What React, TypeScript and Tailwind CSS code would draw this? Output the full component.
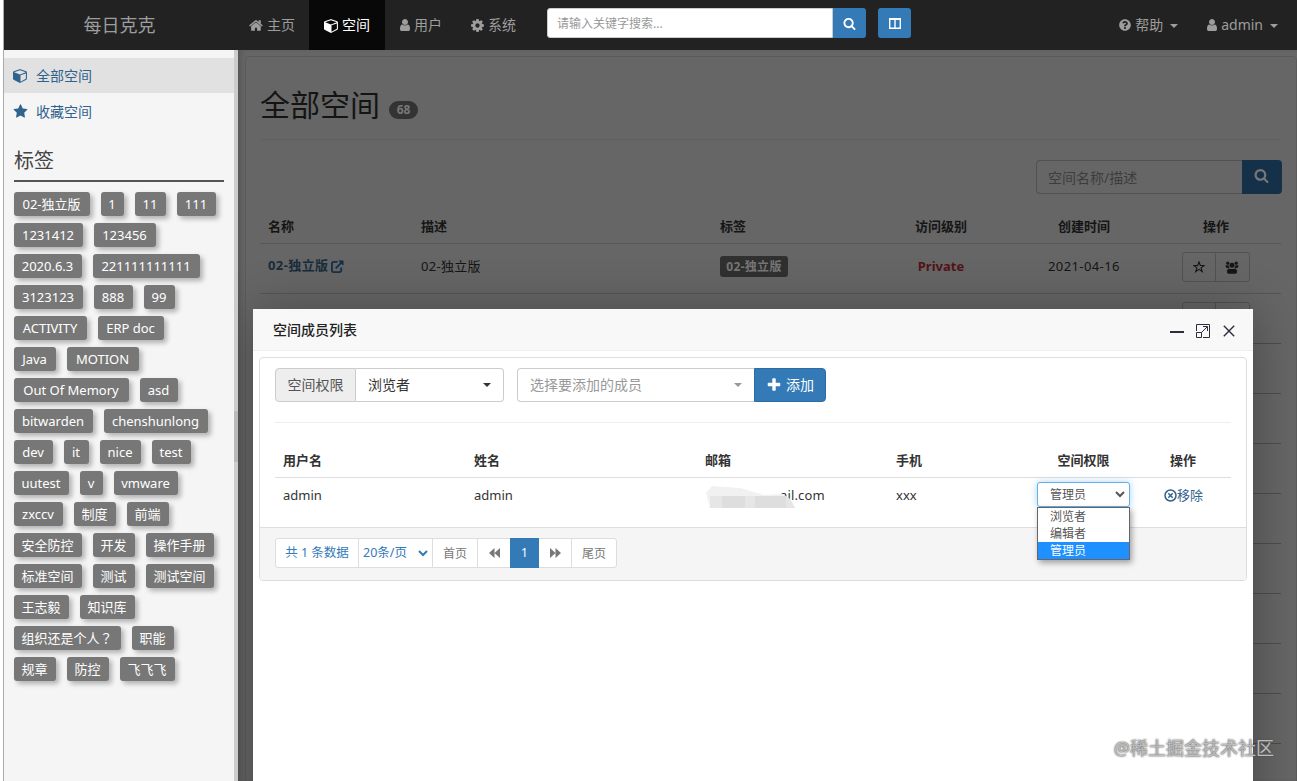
import React from "react";
import { FaQuestionCircle } from "react-icons/fa";

const PATHS = {
  home: "M1408 992v480q0 26-19 45t-45 19h-384v-384h-256v384h-384q-26 0-45-19t-19-45v-480q0-1 .5-3t.5-3l575-474 575 474q1 2 1 6zm223-69l-62 74q-8 9-21 11h-3q-13 0-21-7l-692-577-692 577q-12 8-24 7-13-2-21-11l-62-74q-8-10-7-23.5t11-21.5l719-599q32-26 76-26t76 26l244 204v-195q0-14 9-23t23-9h192q14 0 23 9t9 23v408l219 182q10 8 11 21.5t-7 23.5z",
  user: "M1536 1399q0 109-62.5 187t-150.5 78h-854q-88 0-150.5-78t-62.5-187q0-85 8.5-160.5t31.5-152 58.5-131 94-89 134.5-34.5q131 128 313 128t313-128q76 0 134.5 34.5t94 89 58.5 131 31.5 152 8.5 160.5zm-256-887q0 159-112.5 271.5t-271.5 112.5-271.5-112.5-112.5-271.5 112.5-271.5 271.5-112.5 271.5 112.5 112.5 271.5z",
  cube: "M896 1629l640-349v-636l-640 233v752zm-64-865l698-254-698-254-698 254zm832-252v768q0 35-18 65t-49 47l-704 384q-28 16-61 16t-61-16l-704-384q-31-17-49-47t-18-65v-768q0-40 23-73t61-47l704-256q22-8 44-8t44 8l704 256q38 14 61 47t23 73z",
  cog: "M1152 896q0-106-75-181t-181-75-181 75-75 181 75 181 181 75 181-75 75-181zm512-109v222q0 12-8 23t-20 13l-185 28q-19 54-39 91 35 50 107 138 10 12 10 25t-9 23q-27 37-99 108t-94 71q-12 0-26-9l-138-108q-44 23-91 38-16 136-29 186-7 28-36 28h-222q-14 0-24.5-8.5t-11.5-21.5l-28-184q-49-16-90-37l-141 107q-10 9-25 9-14 0-25-11-126-114-165-168-7-10-7-23 0-12 8-23 15-21 51-66.5t54-70.5q-27-50-41-99l-183-27q-13-2-21-12.5t-8-23.5v-222q0-12 8-23t19-13l186-28q14-46 39-92-40-57-107-138-10-12-10-24 0-10 9-23 26-36 98.5-107.5t94.5-71.5q13 0 26 10l138 107q44-23 91-38 16-136 29-186 7-28 36-28h222q14 0 24.5 8.5t11.5 21.5l28 184q49 16 90 37l142-107q9-9 24-9 13 0 25 10 129 119 165 170 7 8 7 22 0 12-8 23-15 21-51 66.5t-54 70.5q26 50 41 98l183 28q13 2 21 12.5t8 23.5z",
  star: "M1728 647q0 22-26 48l-363 354 86 500q1 7 1 20 0 21-10.5 35.5t-30.5 14.5q-19 0-40-12l-449-236-449 236q-22 12-40 12-21 0-31.5-14.5t-10.5-35.5q0-6 2-20l86-500-364-354q-25-27-25-48 0-37 56-46l502-73 225-455q19-41 49-41t49 41l225 455 502 73q56 9 56 46z",
  search: "M1216 832q0-185-131.5-316.5t-316.5-131.5-316.5 131.5-131.5 316.5 131.5 316.5 316.5 131.5 316.5-131.5 131.5-316.5zm512 832q0 52-38 90t-90 38q-54 0-90-38l-343-342q-179 124-399 124-143 0-273.5-55.5t-225-150-150-225-55.5-273.5 55.5-273.5 150-225 225-150 273.5-55.5 273.5 55.5 225 150 150 225 55.5 273.5q0 220-124 399l343 343q37 37 37 90z",
  plus: "M1600 736v192q0 40-28 68t-68 28h-416v416q0 40-28 68t-68 28h-192q-40 0-68-28t-28-68v-416h-416q-40 0-68-28t-28-68v-192q0-40 28-68t68-28h416v-416q0-40 28-68t68-28h192q40 0 68 28t28 68v416h416q40 0 68 28t28 68z",
};

function Icon({ name, className = "size-[15px]" }: { name: keyof typeof PATHS; className?: string }) {
  return (
    <svg viewBox="0 0 1792 1792" fill="currentColor" className={`shrink-0 ${className}`}>
      <path d={PATHS[name]} />
    </svg>
  );
}

function Caret({ className = "" }: { className?: string }) {
  return (
    <svg viewBox="0 0 8 4" fill="currentColor" className={`h-1 w-2 shrink-0 ${className}`}>
      <path d="M0 0h8L4 4z" />
    </svg>
  );
}

function Chevron({ className = "" }: { className?: string }) {
  return (
    <svg viewBox="0 0 10 7" fill="none" stroke="currentColor" strokeWidth="2" className={`h-[7px] w-[10px] shrink-0 ${className}`}>
      <path d="M1 1l4 4 4-4" />
    </svg>
  );
}

const TAG_ROWS: [string, string][][] = [
  [["02-独立版", "w-[76px]"], ["1", "w-[23px]"], ["11", "w-[31px]"], ["111", "w-[39px]"]],
  [["1231412", "w-[69px]"], ["123456", "w-[62px]"]],
  [["2020.6.3", "w-[68px]"], ["221111111111", "w-[107px]"]],
  [["3123123", "w-[69px]"], ["888", "w-[39px]"], ["99", "w-[31px]"]],
  [["ACTIVITY", "w-[73px]"], ["ERP doc", "w-[66px]"]],
  [["Java", "w-[42px]"], ["MOTION", "w-[72px]"]],
  [["Out Of Memory", "w-[115px]"], ["asd", "w-[38px]"]],
  [["bitwarden", "w-[79px]"], ["chenshunlong", "w-[104px]"]],
  [["dev", "w-[39px]"], ["it", "w-[25px]"], ["nice", "w-[41px]"], ["test", "w-[39px]"]],
  [["uutest", "w-[55px]"], ["v", "w-[23px]"], ["vmware", "w-[64px]"]],
  [["zxccv", "w-[49px]"], ["制度", "w-[42px]"], ["前端", "w-[42px]"]],
  [["安全防控", "w-[68px]"], ["开发", "w-[42px]"], ["操作手册", "w-[68px]"]],
  [["标准空间", "w-[68px]"], ["测试", "w-[42px]"], ["测试空间", "w-[68px]"]],
  [["王志毅", "w-[55px]"], ["知识库", "w-[55px]"]],
  [["组织还是个人？", "w-[107px]"], ["职能", "w-[42px]"]],
  [["规章", "w-[42px]"], ["防控", "w-[42px]"], ["飞飞飞", "w-[55px]"]],
];

function Navbar() {
  return (
    <nav className="flex h-[50px] shrink-0 bg-[#222] text-sm text-[#9d9d9d]">
      <div className="flex w-[231px] items-center justify-center text-lg">每日克克</div>
      <a className="flex w-[74px] items-center justify-center gap-[3px]"><Icon name="home" />主页</a>
      <a className="flex w-[76px] items-center justify-center gap-[3px] bg-[#080808] text-white"><Icon name="cube" />空间</a>
      <a className="flex w-[70px] items-center justify-center gap-[2px]"><Icon name="user" className="size-[14px]" />用户</a>
      <a className="flex w-[76px] items-center justify-center gap-[3px]"><Icon name="cog" />系统</a>
      <div className="mt-2 ml-4 flex h-[30px]">
        <div className="flex w-[286px] items-center rounded-l-[3px] border border-[#ccc] bg-white pt-[1px] pl-[9px] text-xs text-[#999]">请输入关键字搜索...</div>
        <button className="flex w-[33px] items-center justify-center rounded-r-[3px] bg-[#337ab7] text-white"><Icon name="search" className="size-[13px]" /></button>
        <button className="ml-3 flex w-[33px] items-center justify-center rounded-[3px] bg-[#337ab7] text-white">
          <svg viewBox="0 0 12 11" fill="none" stroke="currentColor" strokeWidth="1.4" className="h-[11px] w-3"><path d="M.7.7h10.6v9.6H.7zM6 1v9M1 1.2h10" /></svg>
        </button>
      </div>
      <div className="ml-auto flex items-center pr-[19px] pb-[1px]">
        <FaQuestionCircle className="size-3 shrink-0" />
        <span className="ml-1">帮助</span>
        <Caret className="mt-[2px] ml-[7px]" />
        <Icon name="user" className="ml-[27px] size-[14px]" />
        <span className="ml-[2px] text-[14px]">admin</span>
        <Caret className="mt-[2px] ml-[7px]" />
      </div>
    </nav>
  );
}

function Sidebar() {
  return (
    <aside className="flex w-[234px] shrink-0 bg-[#f5f5f5]">
      <div className="w-[230px] pt-2">
        <a className="flex h-[35px] items-center bg-[#e1e1e1] pl-[9px] text-sm text-[#2f628c]"><Icon name="cube" className="size-[15px]" /><span className="ml-2">全部空间</span></a>
        <a className="mt-[1px] flex h-[35px] items-center pl-[9px] text-sm text-[#2f628c]"><Icon name="star" /><span className="ml-2">收藏空间</span></a>
        <div className="mr-[10px] ml-[10px]">
          <h3 className="mt-[10px] flex h-[43px] items-center border-b-2 border-[#555] pt-[2px] text-xl text-[#444]">标签</h3>
          <div className="mt-[10px] flex flex-col gap-[7px]">
            {TAG_ROWS.map((row, i) => (
              <div key={i} className="flex gap-[11px]">
                {row.map(([label, width]) => (
                  <span key={label} className={`flex h-6 items-center justify-center rounded-[3px] bg-[#777] pr-[1px] text-[13px] whitespace-nowrap text-white shadow-[3px_3px_5px_rgba(0,0,0,0.28)] ${label.endsWith("？") ? "font-['Noto_Sans_CJK_TC',sans-serif]" : "pt-[1px]"} ${width}`}>{label}</span>
                ))}
              </div>
            ))}
          </div>
        </div>
      </div>
      <div className="w-1 bg-[#ccc] pt-[361px]"><div className="h-[51px] bg-[#b9b9b9]" /></div>
    </aside>
  );
}

const SPACE_GRID = "grid grid-cols-[153px_299px_163px_132px_154px_1fr]";

function RowButtons() {
  return (
    <div className="mt-2 mr-[11px] flex h-[30px] w-[68px] justify-self-center rounded-[3px] border border-[#525252] text-[#161616]">
      <span className="flex w-[33px] items-center justify-center border-r border-[#525252]">
        <svg viewBox="0 0 14 14" fill="none" stroke="currentColor" strokeWidth="1.3" className="size-3"><path d="M7 1l1.5 4.3H13L9.4 8l1.4 4.4L7 9.7l-3.8 2.7L4.6 8 1 5.3h4.5z" /></svg>
      </span>
      <span className="flex flex-1 items-center justify-center">
        <svg viewBox="0 0 14 13" fill="currentColor" className="h-[13px] w-[14px]"><circle cx="2.800" cy="2.200" r="1.600" /><circle cx="11.200" cy="2.200" r="1.600" /><circle cx="7" cy="4.300" r="2.500" /><path d="M.6 4.200h3q0 1.800 1 2.800H1.800Q.4 7 .6 4.200zM13.400 4.200h-3q0 1.800-1 2.800h2.800Q13.600 7 13.400 4.200zM4 7.400q3 1.400 6 0 2 .4 2 3.600 0 1.700-1.500 1.700h-7Q2 12.700 2 11q0-3.200 2-3.600z" /></svg>
      </span>
    </div>
  );
}

function SpaceList() {
  return (
    <div className="mt-[6px] ml-[7px] h-[760px] rounded-[4px] border border-[#5b5b5b] pr-[15px] pl-[14px]">
      <div className="flex h-[83px] items-center gap-[9px] border-b border-[#606060] pt-3">
        <h1 className="text-[30px] leading-[33px] text-[#141414]">全部空间</h1>
        <span className="mt-3 flex h-[18px] w-[29px] items-center justify-center rounded-full bg-[#333] text-xs font-bold text-[#777]">68</span>
      </div>
      <div className="mt-5 -mr-[1px] flex h-[34px] justify-end">
        <div className="flex w-[206px] items-center rounded-l-[4px] border border-r-0 border-[#515151] pt-[1px] pl-[11px] text-sm text-[#3d3d3d]">空间名称/描述</div>
        <div className="flex w-10 items-center justify-center rounded-r-[4px] bg-[#15314a] text-[#777]"><Icon name="search" className="mr-[1px] mb-[3px] size-[15px]" /></div>
      </div>
      <div className={`mt-4 h-[34px] items-center border-b border-[#575757] text-[13px] font-bold text-[#151515] ${SPACE_GRID}`}>
        <span className="pl-2">名称</span><span className="pl-2">描述</span><span className="pl-2">标签</span>
        <span className="text-center">访问级别</span><span className="pl-[51px]">创建时间</span><span className="pl-[42px]">操作</span>
      </div>
      <div className={`h-[50px] border-b border-[#555] text-[13px] text-[#151515] ${SPACE_GRID}`}>
        <span className="mt-3 flex h-5 items-center gap-[3px] pl-2 font-bold tracking-[0.4px] text-[#182c3c]">02-独立版
          <svg viewBox="0 0 14 14" fill="none" stroke="currentColor" strokeWidth="2" className="size-[13px] text-[#15314a]"><path d="M7 2H3Q1 2 1 4v7q0 2 2 2h6q2 0 2-2V8M5 9l7-7" /><path d="M8.500 1H13v4.500z" fill="currentColor" strokeWidth="1" /></svg>
        </span>
        <span className="mt-3 h-5 pl-2 leading-5 tracking-[0.3px]">02-独立版</span>
        <span className="mt-3 ml-2 flex h-[21px] w-[68px] items-center justify-center rounded-[3px] bg-[#303030] text-xs font-bold tracking-[0.300px] text-[#777]">02-独立版</span>
        <span className="mt-3 text-center leading-5 font-bold text-[#521415]">Private</span>
        <span className="mt-3 pl-[41px] text-[13px] leading-5 tracking-[0.400px]">2021-04-16</span>
        <RowButtons />
      </div>
      {[1, 2, 3, 4, 5, 6, 7, 8, 9].map((row) => (
        <div key={row} className={`h-[50px] border-b border-[#4d4d4d] ${SPACE_GRID}`}><div className="col-start-6 grid"><RowButtons /></div></div>
      ))}
    </div>
  );
}

const MEMBER_GRID = "grid grid-cols-[191px_231px_191px_141px_109px_1fr]";

function MemberDialog() {
  return (
    <section className="absolute top-[259px] left-[15px] h-[540px] w-[1000px] rounded-t-[2px] bg-white shadow-[1px_1px_50px_rgba(0,0,0,0.3)]">
      <header className="flex h-[42px] items-center border-b border-[#eee] bg-[#f8f8f8] pr-[18px] pl-5 text-sm font-medium text-[#222]">
        空间成员列表
        <div className="mt-[2px] ml-auto flex items-center text-[#2e2d3c]">
          <svg viewBox="0 0 14 14" stroke="currentColor" strokeWidth="2" className="size-[14px]"><path d="M0 8h14" /></svg>
          <svg viewBox="0 0 14 14" fill="none" stroke="currentColor" className="ml-3 size-[14px]"><path d="M.5 7V.5h13v13H7M.5 8.500h5v5h-5zM5.500 8.500L11 3M7 2.500h4.500V7" /></svg>
          <svg viewBox="0 0 12 12" stroke="currentColor" strokeWidth="1.4" className="ml-[13px] size-3"><path d="M.8.800l10.400 10.400M11.200.8L.8 11.200" /></svg>
        </div>
      </header>
      <div className="mx-[6px] mt-[6px] rounded-[4px] border border-[#ddd]">
        <div className="h-[169px] px-[15px] pt-[10px]">
          <div className="flex h-[34px] text-sm">
            <div className="flex w-[81px] items-center justify-center rounded-l-[4px] border border-[#ccc] bg-[#eee] text-[#555]">空间权限</div>
            <div className="flex w-[148px] items-center justify-between rounded-r-[4px] border border-l-0 border-[#ccc] pr-3 pl-3 text-[#333]">浏览者<Caret /></div>
            <div className="ml-[13px] flex w-[237px] items-center justify-between rounded-l-[4px] border border-r-0 border-[#ccc] pr-3 pl-3 text-[#999]">选择要添加的成员<Caret /></div>
            <button className="flex w-[72px] items-center justify-center gap-1 rounded-r-[4px] border border-[#2e6da4] bg-[#337ab7] text-white"><Icon name="plus" className="size-[16px]" />添加</button>
          </div>
          <div className="mt-5 h-[1px] bg-[#eee]" />
          <div className={`mt-5 h-[35px] items-center border-b border-[#ddd] pt-[1px] text-[13px] font-bold text-[#333] ${MEMBER_GRID}`}>
            <span className="pl-2">用户名</span><span className="pl-2">姓名</span><span className="pl-2">邮箱</span><span className="pl-2">手机</span><span className="text-center">空间权限</span><span className="pl-8">操作</span>
          </div>
          <div className={`h-[35px] items-center text-[13px] text-[#333] ${MEMBER_GRID}`}>
            <span className="pl-2">admin</span>
            <span className="pl-2">admin</span>
            <div className="relative flex pl-[83px]">
              <span className="tracking-[0.150px]">ail.com</span>
              <svg viewBox="0 0 96 24" className="absolute top-[-2px] left-2 h-6 w-24">
                <path d="M1 9L7 2l28 2 24 7 17-1q9 2 14 14H5z" fill="#f1f1f1" />
                <path d="M5 12h76v12H5z" fill="#dedede" />
                <path d="M5 12h12v12H5zM40 12h10v12H40zM81 12l4 3 5 9h-9z" fill="#e6e6e6" />
              </svg>
            </div>
            <span className="pl-2">xxx</span>
            <div className="relative -top-[1px] ml-2 flex h-[25px] w-[93px] items-center justify-between rounded-[3px] border border-[#66afe9] bg-white pr-1 pl-3 text-xs text-[#555] shadow-[0_0_7px_rgba(102,175,233,0.55)]">
              管理员<Chevron />
              <div className="absolute top-6 left-[-1px] z-10 w-[93px] border border-[#666] bg-white shadow-[2px_3px_6px_rgba(0,0,0,0.35)]">
                <div className="h-[17px] pl-3 leading-[17px]">浏览者</div>
                <div className="h-[17px] pl-3 leading-[17px]">编辑者</div>
                <div className="h-[17px] bg-[#1e90ff] pl-3 leading-[17px] text-white">管理员</div>
              </div>
            </div>
            <a className="flex items-center pl-[26px] text-[#2f628c]">
              <svg viewBox="0 0 13 13" fill="none" stroke="currentColor" strokeWidth="1.500" className="size-[13px]"><circle cx="6.500" cy="6.500" r="5.500" /><path d="M4.300 4.300l4.400 4.400M8.700 4.300L4.300 8.700" /></svg>移除
            </a>
          </div>
        </div>
        <footer className="h-[53px] rounded-b-[3px] border-t border-[#ddd] bg-[#f5f5f5] px-[15px] pt-[10px]">
          <div className="flex h-[30px] w-[342px] rounded-[3px] border border-[#ddd] bg-white text-xs text-[#777]">
            <span className="flex w-[83px] items-center justify-center border-r border-[#ddd] pt-[1px] text-[12.500px] text-[#337ab7]">共 1 条数据</span>
            <span className="flex w-[74px] items-center justify-between border-r border-[#ddd] pt-[1px] pr-1 pl-1 text-[12.500px] text-[#337ab7]">20条/页<Chevron /></span>
            <span className="flex w-[45px] items-center justify-center border-r border-[#ddd] pt-[1px]">首页</span>
            <span className="flex w-8 items-center justify-center"><svg viewBox="0 0 11 10" fill="currentColor" className="h-[10px] w-[11px]"><path d="M5.500 0v10L0 5zM11 0v10L5.500 5z" /></svg></span>
            <span className="-my-[1px] flex w-[29px] items-center justify-center bg-[#337ab7] text-white">1</span>
            <span className="flex w-[33px] items-center justify-center border-r border-[#ddd]"><svg viewBox="0 0 11 10" fill="currentColor" className="h-[10px] w-[11px]"><path d="M0 0v10l5.500-5zM5.500 0v10L11 5z" /></svg></span>
            <span className="flex flex-1 items-center justify-center pt-[1px]">尾页</span>
          </div>
        </footer>
      </div>
    </section>
  );
}

export default function App() {
  return (
    <div className="relative h-[781px] w-[1297px] overflow-hidden bg-white pl-[3px] font-['Noto_Sans','Noto_Sans_CJK_SC',sans-serif]">
      <div className="flex h-full flex-col border-l border-[#aaa]">
        <Navbar />
        <div className="flex min-h-0 flex-1">
          <Sidebar />
          <main className="relative min-w-0 flex-1 overflow-hidden bg-[#666] shadow-[inset_5px_0_6px_-3px_rgba(0,0,0,0.2)]">
            <SpaceList />
            <MemberDialog />
          </main>
        </div>
      </div>
      <div className="absolute right-[23px] bottom-5 text-lg leading-[26px] text-white/60 [text-shadow:0_0_2px_#444,0_0_1px_#777]">@稀土掘金技术社区</div>
    </div>
  );
}
